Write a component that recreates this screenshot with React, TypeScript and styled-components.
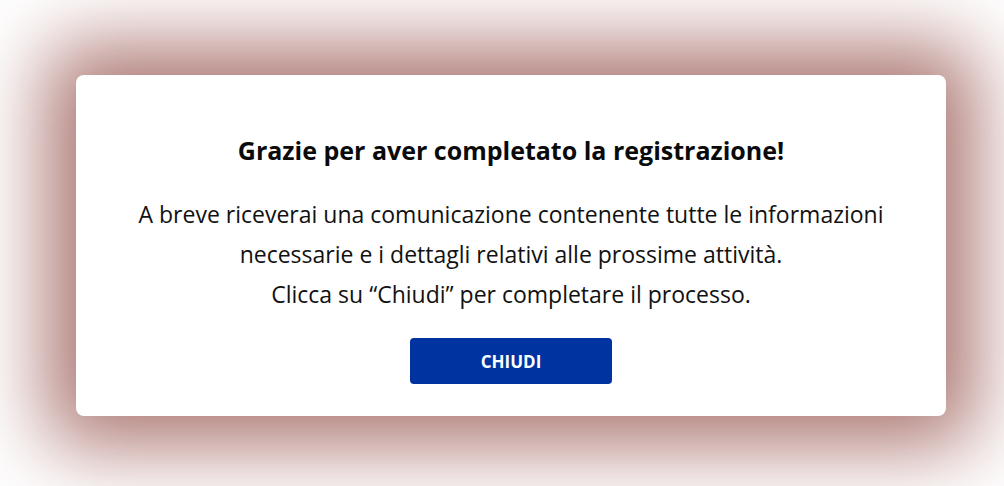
import React from 'react';
import styled, { createGlobalStyle } from 'styled-components';

const GlobalStyle = createGlobalStyle`
  html, body {
    margin: 0;
    padding: 0;
    background: #ffffff;
  }
  body {
    font-family: "Open Sans", "Liberation Sans", sans-serif;
  }
`;

const Page = styled.div`
  width: 1004px;
  height: 486px;
  box-sizing: border-box;
  padding: 5px 0 0 18px;
  display: flex;
  justify-content: center;
  align-items: center;
  overflow: hidden;
  background: #ffffff;
`;

const Dialog = styled.div`
  width: 870px;
  height: 341px;
  flex-shrink: 0;
  box-sizing: border-box;
  background: #ffffff;
  border-radius: 8px;
  box-shadow: 0 0 80px 30px rgba(152, 88, 82, 0.82);
  display: flex;
  flex-direction: column;
  align-items: center;
  padding-top: 58px;
  color: #111111;
`;

const Title = styled.h2`
  margin: 0;
  font-size: 25px;
  font-weight: 700;
  line-height: 34px;
  color: #0a0a0a;
`;

const Message = styled.p`
  margin: 27px 0 0;
  font-size: 23px;
  line-height: 40px;
  text-align: center;
  white-space: nowrap;
`;

const CloseButton = styled.button`
  margin-top: 24px;
  width: 202px;
  height: 46px;
  border: none;
  border-radius: 4px;
  background: #0033a0;
  color: #ffffff;
  font-family: inherit;
  font-size: 17px;
  font-weight: 700;
  cursor: pointer;
`;

export default function App() {
  return (
    <>
      <GlobalStyle />
      <Page>
        <Dialog>
          <Title>Grazie per aver completato la registrazione!</Title>
          <Message>
            A breve riceverai una comunicazione contenente tutte le informazioni
            <br />
            necessarie e i dettagli relativi alle prossime attività.
            <br />
            Clicca su “Chiudi” per completare il processo.
          </Message>
          <CloseButton>CHIUDI</CloseButton>
        </Dialog>
      </Page>
    </>
  );
}
